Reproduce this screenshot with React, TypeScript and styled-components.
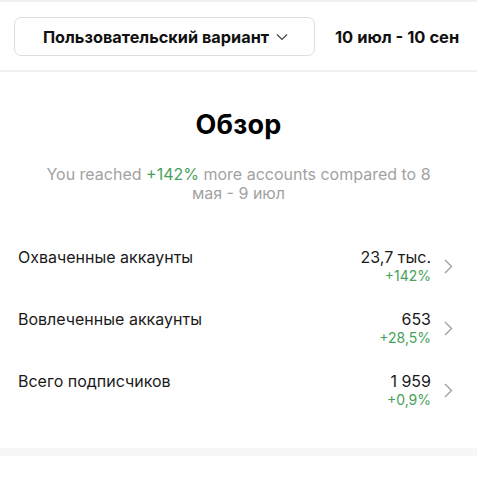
import React from "react";
import styled, { createGlobalStyle } from "styled-components";

const Global = createGlobalStyle`
  html, body { margin: 0; padding: 0; background: #fff; }
  body { font-family: Inter, "Noto Sans", sans-serif; color: #111; -webkit-font-smoothing: antialiased; }
`;

const Page = styled.div`
  width: 477px;
  height: 480px;
  overflow: hidden;
  background: #fff;
  display: flex;
  flex-direction: column;
`;

const Rule = styled.div<{ $h?: number; $c?: string }>`
  height: ${(p) => p.$h ?? 2}px;
  background: ${(p) => p.$c ?? "#f0f0f0"};
  flex: none;
`;

const Toolbar = styled.div`
  display: flex;
  align-items: center;
  padding: 15px 0 14px 14px;
  gap: 20px;
`;

const Picker = styled.button`
  width: 301px;
  height: 39px;
  border: 1px solid #dedede;
  border-radius: 7px;
  background: #fff;
  display: flex;
  align-items: center;
  justify-content: center;
  gap: 7px;
  font: 700 16.3px Inter, sans-serif;
  color: #111;
  padding: 0 0 0 2px;
`;

const Range = styled.span`
  font: 700 16.5px Inter, sans-serif;
  color: #111;
`;

const Overview = styled.section`
  display: flex;
  flex-direction: column;
  align-items: center;
  padding: 36px 30px 0;
`;

const Title = styled.h1`
  margin: 0;
  font: 700 27px/33px Inter, sans-serif;
  color: #000;
  letter-spacing: 0.2px;
`;

const Lead = styled.p`
  margin: 24px 0 0;
  font: 400 16px/19px Inter, sans-serif;
  color: #a2a2a2;
  text-align: center;
`;

const Up = styled.span`
  color: #47a15a;
`;

const Metrics = styled.div`
  display: flex;
  flex-direction: column;
  padding: 44px 0 0;
`;

const Row = styled.div`
  display: flex;
  align-items: flex-start;
  padding: 0 24px 0 18px;
  height: 62px;
`;

const Label = styled.span`
  flex: 1;
  font: 400 16px/20px Inter, sans-serif;
  color: #1a1a1a;
`;

const Figures = styled.div`
  display: flex;
  flex-direction: column;
  align-items: flex-end;
`;

const Value = styled.span`
  font: 400 16px/20px Inter, sans-serif;
  color: #1a1a1a;
`;

const Delta = styled.span`
  font: 400 14px/17px Inter, sans-serif;
  color: #47a15a;
`;

const Chevron = styled.svg`
  margin: 12px 0 0 13px;
  flex: none;
`;

const Spacer = styled.div`
  flex: 1;
`;

const rows = [
  { label: "Охваченные аккаунты", value: "23,7 тыс.", delta: "+142%" },
  { label: "Вовлеченные аккаунты", value: "653", delta: "+28,5%" },
  { label: "Всего подписчиков", value: "1 959", delta: "+0,9%" },
];

export default function App() {
  return (
    <Page>
      <Global />
      <Rule $h={2} />
      <Toolbar>
        <Picker>
          Пользовательский вариант
          <svg width="12" height="8" viewBox="0 0 12 8">
            <path d="M1 1.5 L6 6.5 L11 1.5" fill="none" stroke="#444" strokeWidth="1.2" />
          </svg>
        </Picker>
        <Range>10 июл - 10 сен</Range>
      </Toolbar>
      <Rule $h={2} />
      <Overview>
        <Title>Обзор</Title>
        <Lead>
          You reached <Up>+142%</Up> more accounts compared to 8 мая - 9 июл
        </Lead>
      </Overview>
      <Metrics>
        {rows.map((r) => (
          <Row key={r.label}>
            <Label>{r.label}</Label>
            <Figures>
              <Value>{r.value}</Value>
              <Delta>{r.delta}</Delta>
            </Figures>
            <Chevron width="9" height="15" viewBox="0 0 9 15">
              <path d="M1 1 L7.5 7.5 L1 14" fill="none" stroke="#a0a0a0" strokeWidth="1.4" />
            </Chevron>
          </Row>
        ))}
      </Metrics>
      <Spacer />
      <Rule $h={8} $c="#f7f7f7" />
      <Rule $h={24} $c="#fff" />
    </Page>
  );
}
